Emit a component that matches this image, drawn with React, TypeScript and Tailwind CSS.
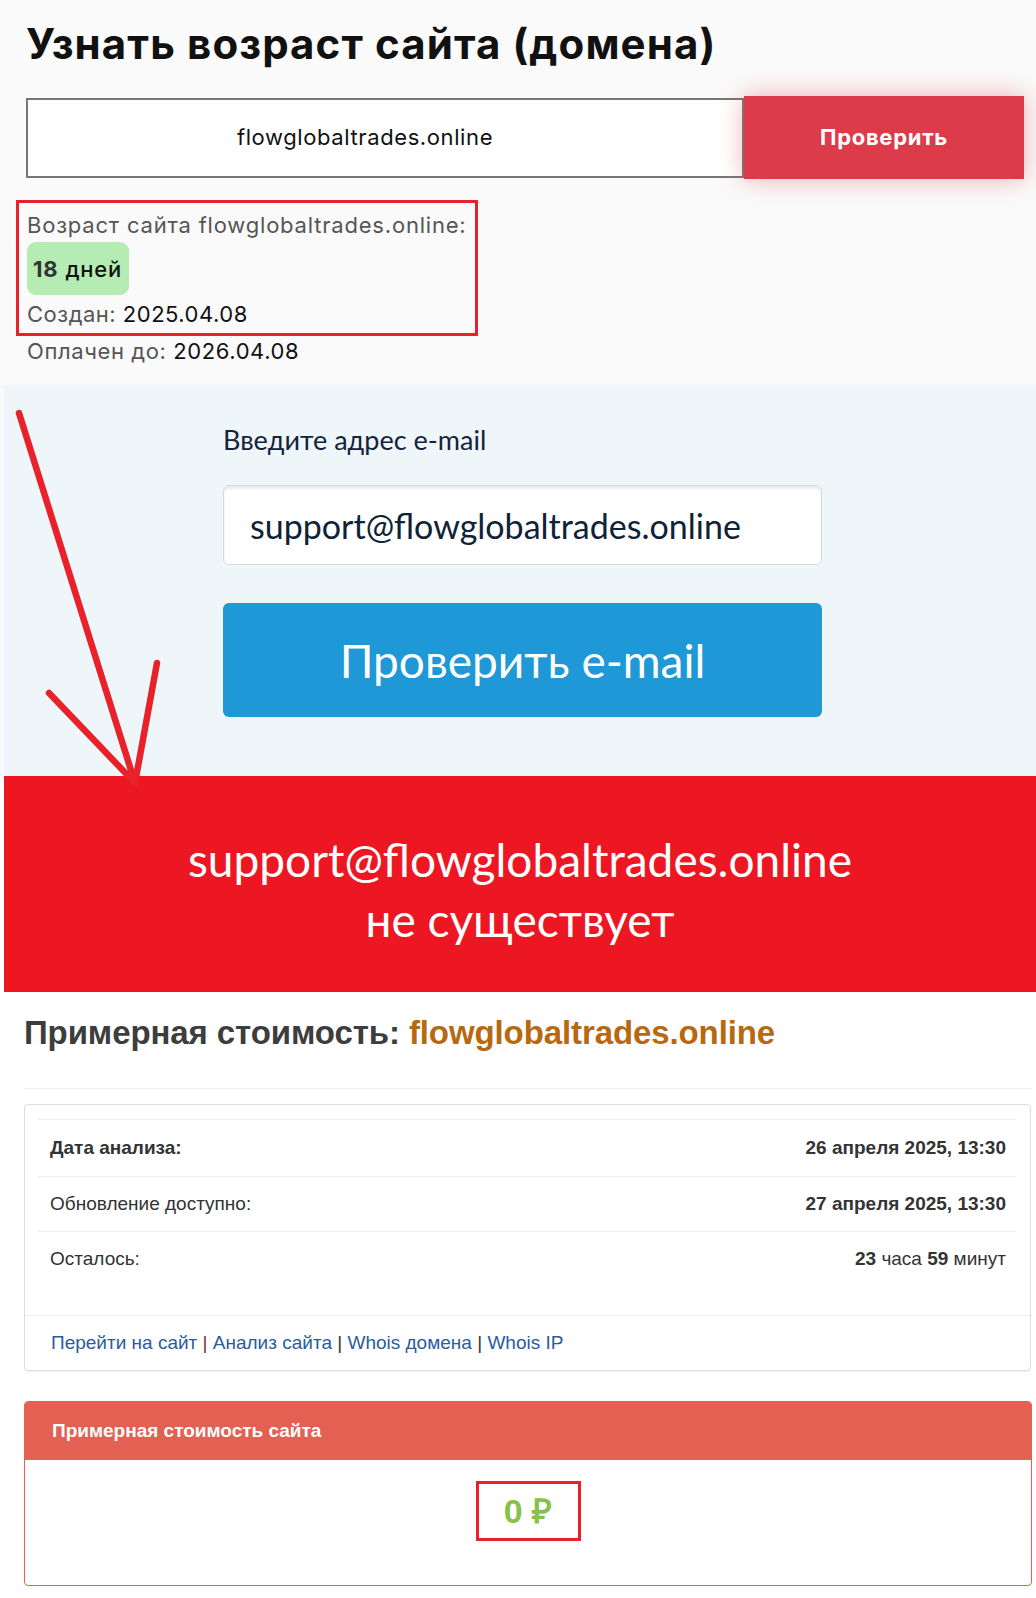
import React from "react";

export default function App() {
  return (
    <div className="relative w-full min-h-[1598px] bg-white overflow-hidden">
      {/* Section 1: domain age */}
      <div className="bg-[#fafafa] h-[385px] pl-[26px] pt-[20px] font-['Inter',sans-serif]">
        <h1 className="text-[42px] leading-[48px] font-bold text-[#111] tracking-[1.1px]">
          Узнать возраст сайта (домена)
        </h1>
        <div className="mt-[28px] flex items-center w-[998px]">
          <div className="h-[80px] w-[718px] border-2 border-[#777] bg-white flex items-center justify-center pr-[40px] text-[22px] tracking-[0.6px] text-[#111]">
            flowglobaltrades.online
          </div>
          <div className="h-[83px] w-[280px] bg-[#dc3c4a] shadow-[0_0_24px_rgba(220,60,74,0.4)] flex items-center justify-center text-white font-bold text-[22px] tracking-[0.7px]">
            Проверить
          </div>
        </div>
        <div className="mt-[21px] -ml-[10px] w-[462px] h-[136px] border-[3px] border-[#e8212b] pl-[8px] pt-[9px]">
          <div className="text-[22px] leading-[26px] tracking-[0.8px] text-[#555]">
            Возраст сайта flowglobaltrades.online:
          </div>
          <div className="mt-[4px] w-[102px] h-[53px] rounded-[9px] bg-[#b4ecb4] flex items-center pl-[6px] text-[22px] leading-[26px] tracking-[0.8px]">
            <span className="font-bold text-[#333]">18</span>
            <span className="ml-[7px] font-medium text-[#111]">дней</span>
          </div>
          <div className="mt-[6px] text-[22px] leading-[26px] tracking-[0.5px] text-[#555]">
            Создан: <span className="text-[#111]">2025.04.08</span>
          </div>
        </div>
        <div className="mt-[2px] pl-[1px] text-[22px] leading-[26px] tracking-[0.6px] text-[#555]">
          Оплачен до: <span className="text-[#111]">2026.04.08</span>
        </div>
      </div>

      {/* Section 2: email check */}
      <div className="bg-[#fafafa] pl-[4px]">
        <div className="bg-[#eff6fa] h-[391px] pt-[39px] pl-[219px] font-['Lato',sans-serif]">
          <div className="text-[27px] leading-[32px] text-[#14243a]">Введите адрес e-mail</div>
          <div className="mt-[29px] w-[599px] h-[80px] rounded-[6px] border border-[#d6dadd] bg-white shadow-[inset_0_3px_2px_rgba(0,0,0,0.08)] flex items-center pl-[26px] text-[34px] text-[#0f2238]">
            support@flowglobaltrades.online
          </div>
          <div className="mt-[38px] w-[599px] h-[114px] rounded-[6px] bg-[#1e98d6] flex items-center justify-center text-[46px] text-white">
            Проверить e-mail
          </div>
        </div>
      </div>

      {/* Section 3: result */}
      <div className="bg-white pl-[4px]">
        <div className="bg-[#ed1723] h-[216px] pt-[54px] flex flex-col items-center font-['Lato',sans-serif] text-white text-[46px] leading-[60px]">
          <div>support@flowglobaltrades.online</div>
          <div>не существует</div>
        </div>
      </div>

      {/* Section 4: estimated value */}
      <div className="pl-[24px] pr-[4px] pt-[21px] font-['Liberation_Sans',Arial,sans-serif]">
        <h2 className="text-[33px] leading-[40px] font-bold text-[#3d3d3d] tracking-[-0.1px]">
          Примерная стоимость: <span className="text-[#b8680f]">flowglobaltrades.online</span>
        </h2>
        <div className="mt-[35px] border-t border-[#eee]" />
        <div className="mt-[15px] w-[1007px] border border-[#ddd] rounded-[4px] bg-white shadow-[0_1px_1px_rgba(0,0,0,0.05)]">
          <div className="px-[13px] pt-[14px] pb-[28px]">
            <div className="border-t border-[#eee] h-[57px] flex items-center justify-between pl-[12px] pr-[11px] text-[19px] text-[#333]">
              <span className="font-bold">Дата анализа:</span>
              <span className="font-bold">26 апреля 2025, 13:30</span>
            </div>
            <div className="border-t border-[#eee] h-[55px] flex items-center justify-between pl-[12px] pr-[11px] text-[19px] text-[#333]">
              <span>Обновление доступно:</span>
              <span className="font-bold">27 апреля 2025, 13:30</span>
            </div>
            <div className="border-t border-[#eee] h-[56px] flex items-center justify-between pl-[12px] pr-[11px] text-[19px] text-[#333]">
              <span>Осталось:</span>
              <span>
                <span className="font-bold">23</span> часа <span className="font-bold">59</span> минут
              </span>
            </div>
          </div>
          <div className="border-t border-[#eee] h-[55px] flex items-center pl-[26px] text-[19px] whitespace-pre">
            <span className="text-[#2b5c9c]">Перейти на сайт</span>
            <span className="text-[#7a3426]"> | </span>
            <span className="text-[#2b5c9c]">Анализ сайта</span>
            <span className="text-[#333]"> | </span>
            <span className="text-[#2b5c9c]">Whois домена</span>
            <span className="text-[#333]"> | </span>
            <span className="text-[#2b5c9c]">Whois IP</span>
          </div>
        </div>

        <div className="mt-[30px] w-[1008px] h-[185px] border border-[#e26152] rounded-[4px] overflow-hidden bg-white">
          <div className="h-[58px] bg-[#e26152] flex items-center pl-[27px] text-white font-bold text-[19px]">
            Примерная стоимость сайта
          </div>
          <div className="flex justify-center pt-[21px]">
            <div className="w-[105px] h-[60px] border-[3px] border-[#e8212b] flex items-center justify-center text-[34px] font-bold text-[#86c14b]">
              0 ₽
            </div>
          </div>
        </div>
      </div>

      {/* Hand-drawn annotation arrow */}
      <svg
        className="absolute left-0 top-0 pointer-events-none"
        width="200"
        height="800"
        viewBox="0 0 200 800"
      >
        <g stroke="#e8212b" strokeWidth="6.5" strokeLinecap="round" fill="none">
          <path d="M19 413 L135 783" />
          <path d="M49 693 L135 783" />
          <path d="M157 663 L135 783" />
        </g>
      </svg>
    </div>
  );
}
